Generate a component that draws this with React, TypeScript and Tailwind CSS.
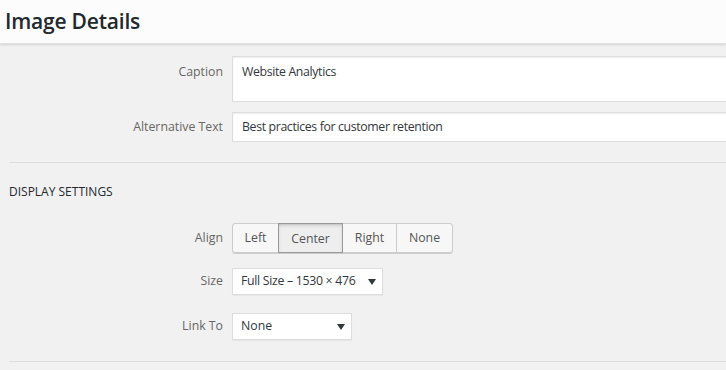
const font = { fontFamily: '"Open Sans", "Noto Sans", "Liberation Sans", sans-serif' };

function Arrow() {
  return (
    <svg width="8" height="6" viewBox="0 0 8 6" className="shrink-0">
      <polygon points="0,0 8,0 4,6" fill="#32373c" />
    </svg>
  );
}

function Row({
  label,
  children,
  top = "",
  center = false,
}: {
  label: string;
  children: React.ReactNode;
  top?: string;
  center?: boolean;
}) {
  return (
    <div className={`flex ${center ? "items-center" : "items-start"}`}>
      <div className={`w-[232px] shrink-0 text-right pr-[9px] text-[12.3px] text-[#666] ${top}`}>{label}</div>
      {children}
    </div>
  );
}

export default function App() {
  const align = ["Left", "Center", "Right", "None"];
  const widths = ["w-[47px]", "w-[65px]", "w-[55px]", "w-[57px]"];
  return (
    <div className="w-[726px] h-[370px] overflow-hidden bg-[#f1f1f1]" style={font}>
      {/* Title bar */}
      <div className="h-[44px] bg-[#fcfcfc] shadow-[0_1px_2px_rgba(0,0,0,0.12)] border-b border-[#e2e2e2] flex items-center pl-[5px]">
        <h1 className="text-[21px] font-semibold text-[#23282d] tracking-[-0.2px]">Image Details</h1>
      </div>

      <div className="pt-[12px]">
        <Row label="Caption" top="pt-[7px]">
          <div className="w-[510px] shrink-0 h-[46px] bg-white border border-[#ddd] shadow-[inset_0_1px_2px_rgba(0,0,0,0.07)] px-[9px] pt-[6px] text-[12.3px] tracking-[-0.35px] text-[#32373c]">
            Website Analytics
          </div>
        </Row>
        <div className="mt-[10px]">
          <Row label="Alternative Text" center>
            <div className="w-[510px] shrink-0 h-[30px] bg-white border border-[#ddd] shadow-[inset_0_1px_2px_rgba(0,0,0,0.07)] px-[9px] flex items-center text-[12.3px] tracking-[-0.35px] text-[#32373c]">
              Best practices for customer retention
            </div>
          </Row>
        </div>

        <div className="ml-[9px] mt-[20px] border-t border-[#ddd]" />

        <h2 className="ml-[9px] mt-[20px] text-[12px] uppercase text-[#23282d] leading-[18px]">Display Settings</h2>

        <div className="mt-[22px]">
          <Row label="Align" center>
            <div className="flex rounded-[3px] shadow-[0_1px_0_#ccc]">
              {align.map((a, i) => (
                <div
                  key={a}
                  className={`h-[30px] flex items-center justify-center text-[12.3px] text-[#555] border ${
                    a === "Center"
                      ? "bg-[#eee] border-[#999] shadow-[inset_0_2px_5px_-3px_rgba(0,0,0,0.5)] pt-[2px] z-10"
                      : "bg-[#f7f7f7] border-[#ccc]"
                  } ${i === 0 ? "rounded-l-[3px]" : "-ml-px"} ${i === 3 ? "rounded-r-[3px]" : ""} ${widths[i]}`}
                >
                  {a}
                </div>
              ))}
            </div>
          </Row>
        </div>
        <div className="mt-[15px]">
          <Row label="Size" center>
            <div className="w-[151px] h-[27px] bg-white border border-[#ddd] shadow-[0_1px_1px_rgba(0,0,0,0.04)] pl-[8px] pr-[6px] flex items-center justify-between text-[12.3px] tracking-[-0.3px] text-[#32373c] whitespace-nowrap">
              <span>Full Size – 1530 × 476</span>
              <Arrow />
            </div>
          </Row>
        </div>
        <div className="mt-[18px]">
          <Row label="Link To" center>
            <div className="w-[120px] h-[27px] bg-white border border-[#ddd] shadow-[0_1px_1px_rgba(0,0,0,0.04)] pl-[8px] pr-[6px] flex items-center justify-between text-[12.3px] text-[#32373c]">
              <span>None</span>
              <Arrow />
            </div>
          </Row>
        </div>

        <div className="ml-[9px] mt-[21px] border-t border-[#ddd]" />
      </div>
    </div>
  );
}
